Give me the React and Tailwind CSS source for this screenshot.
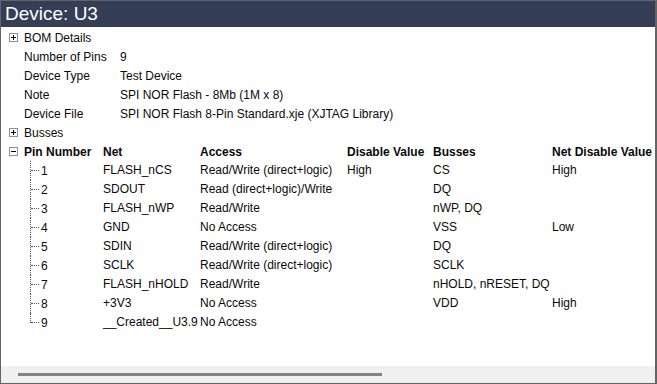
import React from "react";

const props = [
  ["Number of Pins", "9"],
  ["Device Type", "Test Device"],
  ["Note", "SPI NOR Flash - 8Mb (1M x 8)"],
  ["Device File", "SPI NOR Flash 8-Pin Standard.xje (XJTAG Library)"],
];

const pins = [
  ["1", "FLASH_nCS", "Read/Write (direct+logic)", "High", "CS", "High"],
  ["2", "SDOUT", "Read (direct+logic)/Write", "", "DQ", ""],
  ["3", "FLASH_nWP", "Read/Write", "", "nWP, DQ", ""],
  ["4", "GND", "No Access", "", "VSS", "Low"],
  ["5", "SDIN", "Read/Write (direct+logic)", "", "DQ", ""],
  ["6", "SCLK", "Read/Write (direct+logic)", "", "SCLK", ""],
  ["7", "FLASH_nHOLD", "Read/Write", "", "nHOLD, nRESET, DQ", ""],
  ["8", "+3V3", "No Access", "", "VDD", "High"],
  ["9", "__Created__U3.9", "No Access", "", "", ""],
];

const cols = "grid grid-cols-[79px_97px_147px_86px_119px_1fr]";

function Box({ minus }) {
  return (
    <span className="relative w-[9px] h-[9px] border border-[#919191] bg-white mr-[6px] shrink-0">
      <span className="absolute left-[1px] top-[3px] w-[5px] h-px bg-black" />
      {!minus && <span className="absolute left-[3px] top-[1px] w-px h-[5px] bg-black" />}
    </span>
  );
}

export default function App() {
  return (
    <div
      className="w-[657px] h-[384px] flex flex-col border-t border-l border-b border-r-2 border-[#646464] bg-white text-[12px] text-[#0a0a0a]"
      style={{ fontFamily: '"Segoe UI", "Liberation Sans", Arial, sans-serif' }}
    >
      <div className="h-[26px] bg-[#353e57] text-white text-[19px] leading-[26px] pl-[4px]">
        Device: U3
      </div>
      <div className="flex-1 pt-[1px]">
        <div className="h-[19px] flex items-center pl-[8px]">
          <Box />
          <span>BOM Details</span>
        </div>
        {props.map(([k, v]) => (
          <div key={k} className="h-[19px] flex items-center pl-[23px]">
            <span className="w-[96px]">{k}</span>
            <span>{v}</span>
          </div>
        ))}
        <div className="h-[19px] flex items-center pl-[8px]">
          <Box />
          <span>Busses</span>
        </div>
        <div className="h-[19px] flex items-center pl-[8px]">
          <Box minus />
          <div className={cols + " flex-1 font-bold"}>
            <span>Pin Number</span>
            <span>Net</span>
            <span>Access</span>
            <span>Disable Value</span>
            <span>Busses</span>
            <span>Net Disable Value</span>
          </div>
        </div>
        <div className="relative">
          {pins.map((p, i) => (
            <div key={p[0]} className="h-[19px] flex items-center pl-[23px]">
              <div className={cols + " flex-1"}>
                <span className="flex items-center">
                  <span className="relative w-[17px] h-[19px] shrink-0">
                    <span
                      className={
                        "absolute left-[6px] top-0 border-l border-dotted border-[#555] " +
                        (i === pins.length - 1 ? "h-[10px]" : "h-[19px]")
                      }
                    />
                    <span className="absolute left-[7px] top-[9px] w-[8px] border-t border-dotted border-[#555]" />
                  </span>
                  {p[0]}
                </span>
                <span>{p[1]}</span>
                <span>{p[2]}</span>
                <span>{p[3]}</span>
                <span>{p[4]}</span>
                <span>{p[5]}</span>
              </div>
            </div>
          ))}
        </div>
      </div>
      <div className="h-[17px] bg-[#f0f0f0] flex items-center pl-[17px]">
        <div className="w-[364px] h-[3px] bg-[#858585]" />
      </div>
    </div>
  );
}
